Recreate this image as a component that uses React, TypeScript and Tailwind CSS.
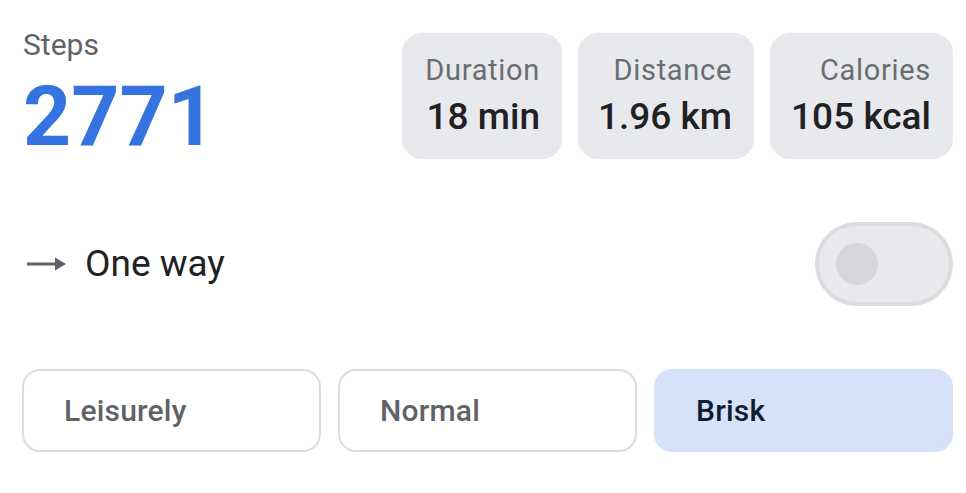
import { useState } from 'react';

const stats = [
    { label: 'Duration', value: '18 min', width: 'w-[160px]' },
    { label: 'Distance', value: '1.96 km', width: 'w-[176px]' },
    { label: 'Calories', value: '105 kcal', width: 'w-[183px]' },
];

const paces = ['Leisurely', 'Normal', 'Brisk'];

function ArrowIcon() {
    return (
        <svg width="40" height="16" viewBox="0 0 40 16" className="shrink-0">
            <line x1="0" y1="8" x2="30" y2="8" stroke="#5f6368" strokeWidth="3" />
            <path d="M28 1.5 L39 8 L28 14.5 Z" fill="#5f6368" />
        </svg>
    );
}

export default function App() {
    const [oneWay, setOneWay] = useState(false);
    const [pace, setPace] = useState('Brisk');

    return (
        <div className="w-[966px] h-[493px] bg-white pl-[22px] pr-[13px] pt-[30px] font-['Roboto',sans-serif] overflow-hidden">
            {/* Summary */}
            <div className="flex justify-between items-start">
                <div className="pl-[1px]">
                    <p className="text-[30px] leading-[30px] text-[#5f6368]">Steps</p>
                    <p className="mt-[15px] text-[84px] leading-[84px] font-bold text-[#3574e0]">2771</p>
                </div>
                <div className="flex gap-4 mt-[3px]">
                    {stats.map((s) => (
                        <div
                            key={s.label}
                            className={`${s.width} flex flex-col items-end rounded-[20px] bg-[#e8e9ed] pl-[20px] pr-[22px] pt-[21px] pb-[22px]`}
                        >
                            <span className="text-[29px] leading-[32px] tracking-[0.7px] text-[#6a6d71] whitespace-nowrap">{s.label}</span>
                            <span className="mt-[11px] text-[37px] leading-[40px] font-medium text-[#1f2124] whitespace-nowrap">{s.value}</span>
                        </div>
                    ))}
                </div>
            </div>

            {/* One way toggle */}
            <div className="mt-[63px] flex items-center justify-between">
                <div className="flex items-center gap-[18px] pl-[5px]">
                    <ArrowIcon />
                    <span className="text-[37px] leading-[44px] text-[#202124]">One way</span>
                </div>
                <button
                    onClick={() => setOneWay(!oneWay)}
                    className="w-[138px] h-[84px] rounded-full border-[4px] border-[#dcdcdf] bg-[#e9e9ed] flex items-center px-[17px]"
                >
                    <span className={`block w-[42px] h-[42px] rounded-full bg-[#d7d7db] ${oneWay ? 'ml-auto' : ''}`} />
                </button>
            </div>

            {/* Pace */}
            <div className="mt-[63px] flex gap-[17px]">
                {paces.map((p) => (
                    <button
                        key={p}
                        onClick={() => setPace(p)}
                        className={`flex-1 h-[83px] rounded-[18px] border-2 pl-[40px] text-left text-[30px] font-medium tracking-[0.2px] ${
                            pace === p
                                ? 'bg-[#d6e2f8] border-[#d6e2f8] text-[#0f1d33]'
                                : 'bg-white border-[#dadce0] text-[#5f6368]'
                        }`}
                    >
                        {p}
                    </button>
                ))}
            </div>
        </div>
    );
}
